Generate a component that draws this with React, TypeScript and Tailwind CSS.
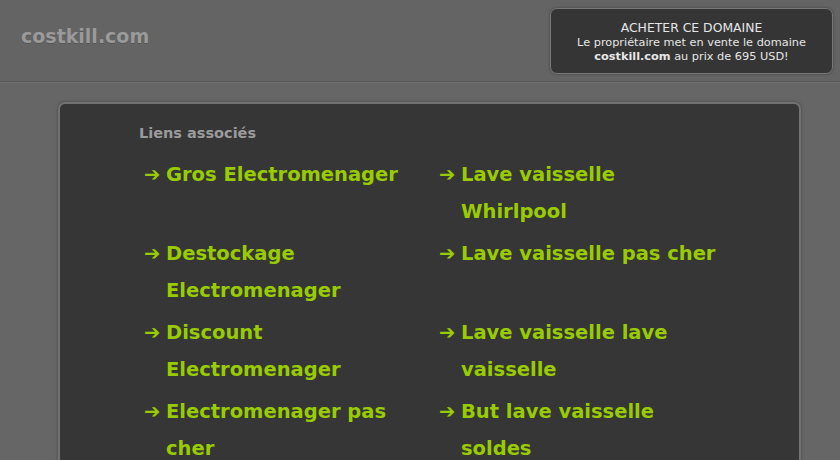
import React from "react";

const left = [
  "Gros Electromenager",
  "Destockage Electromenager",
  "Discount Electromenager",
  "Electromenager pas cher",
];
const right = [
  "Lave vaisselle Whirlpool",
  "Lave vaisselle pas cher",
  "Lave vaisselle lave vaisselle",
  "But lave vaisselle soldes",
];

function Item({ text }: { text: string }) {
  return (
    <div className="flex text-[19.5px] font-bold leading-[37px] text-[#99cc00]">
      <span className="w-[22px] shrink-0">➔</span>
      <span className="w-[258px]">{text}</span>
    </div>
  );
}

export default function App() {
  const rows = left.map((l, i) => [l, right[i]]);
  return (
    <div
      className="h-[460px] w-[840px] overflow-hidden bg-[#666666]"
      style={{ fontFamily: '"DejaVu Sans", Verdana, sans-serif' }}
    >
      <div className="flex h-[82px] items-start justify-between border-b border-[#565656] bg-[#646464] shadow-[0_1px_0_#707070]">
        <div className="pl-[21px] pt-[24px] text-[19px] font-bold leading-[24px] text-[#9a9a9a] [text-shadow:0_1px_0_#555]">
          costkill.com
        </div>
        <div className="mr-[7px] mt-[8px] flex h-[66px] w-[283px] flex-col items-center justify-center rounded-[7px] border border-[#787878] bg-[#353535] pt-[4px] text-[11.3px] leading-[14.5px] text-[#e6e6e6] shadow-[0_0_3px_#444]">
          <div className="text-[12.4px]">ACHETER CE DOMAINE</div>
          <div>Le propriétaire met en vente le domaine</div>
          <div>
            <span className="font-bold">costkill.com</span> au prix de 695 USD!
          </div>
        </div>
      </div>
      <div className="ml-[58px] mt-[20px] w-[743px] rounded-[7px] border-2 border-[#727272] bg-[#363636] pb-[40px] pl-[79px] pt-[19px] shadow-[0_0_3px_#444]">
        <div className="text-[14.5px] font-bold leading-[20px] text-[#9b9b9b]">Liens associés</div>
        <div className="mt-[13px] grid grid-cols-[295px_295px] gap-y-[5px] pl-[5px]">
          {rows.map(([l, r], i) => (
            <React.Fragment key={i}>
              <Item text={l} />
              <Item text={r} />
            </React.Fragment>
          ))}
        </div>
      </div>
    </div>
  );
}
